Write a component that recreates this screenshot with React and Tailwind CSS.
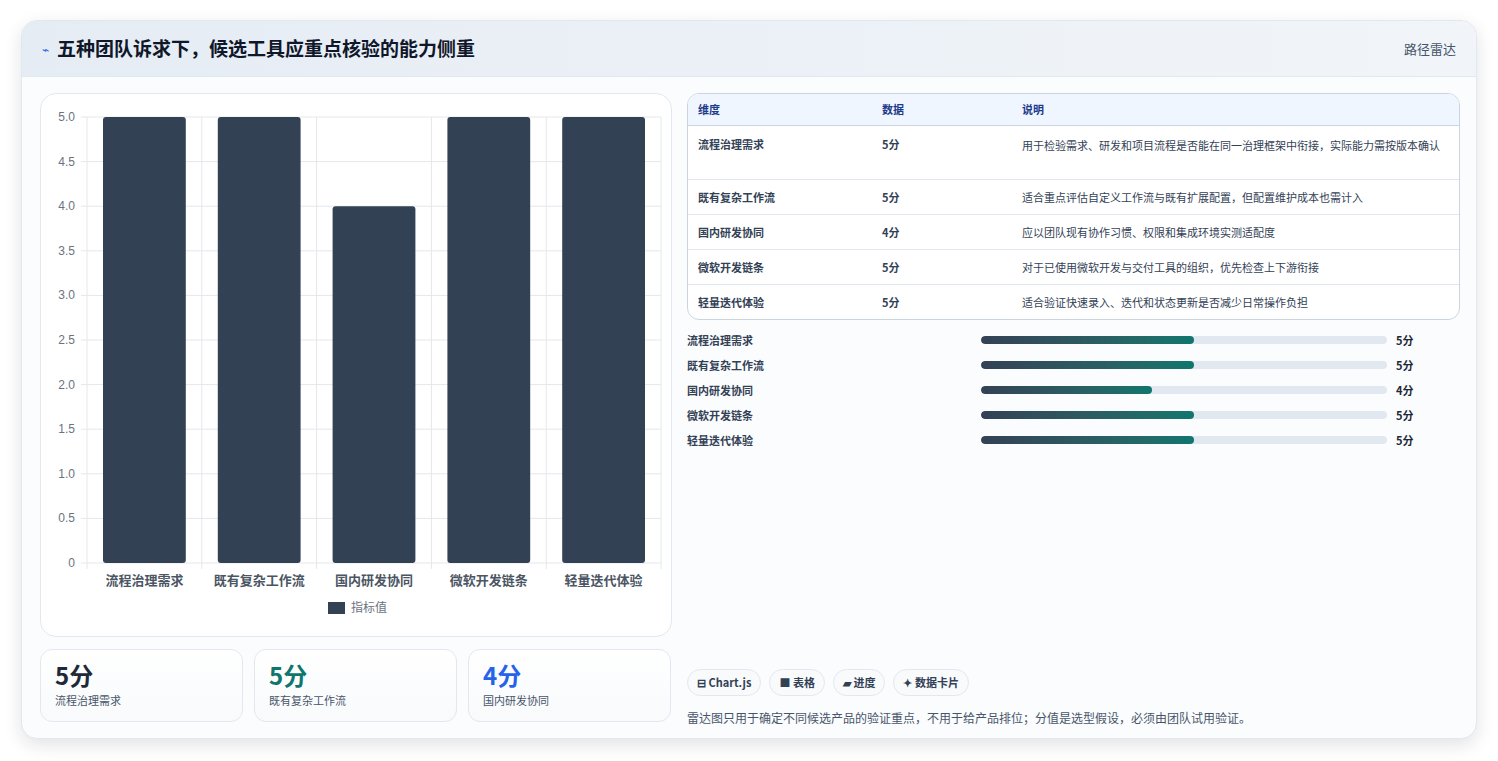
import React from "react";

const rows = [
  ["流程治理需求", 5, "用于检验需求、研发和项目流程是否能在同一治理框架中衔接，实际能力需按版本确认"],
  ["既有复杂工作流", 5, "适合重点评估自定义工作流与既有扩展配置，但配置维护成本也需计入"],
  ["国内研发协同", 4, "应以团队现有协作习惯、权限和集成环境实测适配度"],
  ["微软开发链条", 5, "对于已使用微软开发与交付工具的组织，优先检查上下游衔接"],
  ["轻量迭代体验", 5, "适合验证快速录入、迭代和状态更新是否减少日常操作负担"],
];

function Chart() {
  const W = 632, H = 542;
  const x0 = 46, x1 = 620, y0 = 23, y1 = 469;
  const ticks = [];
  for (let i = 0; i <= 10; i++) ticks.push(i * 0.5);
  const cw = (x1 - x0) / 5;
  return (
    <svg width={W} height={H} className="block">
      {ticks.map((t) => {
        const y = y1 - (t / 5) * (y1 - y0);
        return (
          <g key={t}>
            <line x1={x0 - 6} x2={x1} y1={y} y2={y} stroke="#e5e7eb" />
            <text x={x0 - 12} y={y + 4} textAnchor="end" fontSize="12" fill="#6b7280" fontFamily="Liberation Sans, sans-serif">{t === 0 ? "0" : t.toFixed(1)}</text>
          </g>
        );
      })}
      {[0, 1, 2, 3, 4, 5].map((i) => (
        <line key={i} x1={x0 + i * cw} x2={x0 + i * cw} y1={y0} y2={y1 + 6} stroke="#e5e7eb" />
      ))}
      {rows.map((r, i) => {
        const h = (r[1] / 5) * (y1 - y0);
        return (
          <g key={i}>
            <rect x={x0 + i * cw + 16} y={y1 - h} width={cw - 32} height={h} rx="3" fill="#334155" />
            <text x={x0 + i * cw + cw / 2} y={y1 + 22} textAnchor="middle" fontSize="13" fill="#4b5563" fontWeight="600" fontFamily="Noto Sans CJK SC, sans-serif">{r[0]}</text>
          </g>
        );
      })}
      <rect x={287} y={508} width={17} height={12} fill="#334155" />
      <text x={310} y={518} fontSize="12" fill="#6b7280" fontFamily="Noto Sans CJK SC, sans-serif">指标值</text>
    </svg>
  );
}

export default function App() {
  const stats = [["5分", "流程治理需求", "text-[#1f2937]"], ["5分", "既有复杂工作流", "text-[#0f766e]"], ["4分", "国内研发协同", "text-[#2563eb]"]];
  return (
    <div className="w-[1498px] h-[761px] bg-white pt-5 px-[21px]" style={{ fontFamily: '"Noto Sans CJK SC", "Liberation Sans", sans-serif' }}>
      <div className="w-[1456px] h-[719px] rounded-2xl border border-[#e2e8f0] shadow-[0_6px_18px_rgba(15,23,42,0.12)] overflow-hidden bg-[#fbfcfe] flex flex-col">
        <div className="h-[56px] flex items-center justify-between px-5 bg-gradient-to-r from-[#e6ecf4] to-[#f1f5f9] border-b border-[#e2e8f0]">
          <div className="flex items-center gap-2">
            <span className="text-[#2563eb] text-xs">⌁</span>
            <span className="text-[19px] font-bold text-[#0f172a]">五种团队诉求下，候选工具应重点核验的能力侧重</span>
          </div>
          <span className="text-[13px] text-[#475569]">路径雷达</span>
        </div>
        <div className="flex gap-[15px] px-[18px] pt-4">
          <div className="w-[632px] flex flex-col gap-3">
            <div className="h-[544px] rounded-2xl border border-[#e2e8f0] bg-white"><Chart /></div>
            <div className="flex gap-[11px]">
              {stats.map((s, i) => (
                <div key={i} className="w-[203px] h-[73px] rounded-xl border border-[#e2e8f0] bg-gradient-to-b from-white to-[#f8fafc] px-[14px] pt-[10px]">
                  <div className={`text-[24px] font-bold leading-[30px] ${s[2]}`}>{s[0]}</div>
                  <div className="text-[11px] text-[#475569] mt-[2px]">{s[1]}</div>
                </div>
              ))}
            </div>
          </div>
          <div className="w-[773px] flex flex-col">
            <div className="rounded-xl border border-[#cbd5e1] overflow-hidden bg-white">
              <div className="flex h-[32px] items-center bg-[#eff6ff] border-b border-[#cbd5e1] text-[11px] font-bold text-[#1e3a8a] px-[10px]">
                <div className="w-[184px]">维度</div><div className="w-[140px]">数据</div><div>说明</div>
              </div>
              {rows.map((r, i) => (
                <div key={i} className={`flex px-[10px] text-[11px] text-[#334155] font-semibold ${i ? "border-t border-[#e2e8f0] h-[35px] items-center" : "pt-[10px] h-[53px]"}`}>
                  <div className="w-[184px] shrink-0">{r[0]}</div>
                  <div className="w-[140px] shrink-0">{r[1]}分</div>
                  <div className="w-[430px] leading-[18px] font-normal">{r[2]}</div>
                </div>
              ))}
            </div>
            <div className="flex flex-col gap-[7px] mt-[11px]">
              {rows.map((r, i) => (
                <div key={i} className="flex items-center h-[18px] text-[11px] font-semibold text-[#334155]">
                  <div className="w-[294px]">{r[0]}</div>
                  <div className="w-[406px] h-[8px] rounded-full bg-[#e2e8f0] overflow-hidden">
                    <div className="h-full rounded-full bg-gradient-to-r from-[#334155] to-[#0f766e]" style={{ width: r[1] === 5 ? "52.5%" : "42%" }} />
                  </div>
                  <div className="ml-[9px] font-bold text-[#1f2937]">{r[1]}分</div>
                </div>
              ))}
            </div>
            <div className="flex gap-2 mt-[220px]">
              {["⊟ Chart.js", "■ 表格", "▰ 进度", "✦ 数据卡片"].map((c) => (
                <span key={c} className="h-[27px] px-[9px] flex items-center rounded-full border border-[#e2e8f0] bg-[#f8fafc] text-[11px] font-bold text-[#334155]">{c}</span>
              ))}
            </div>
            <div className="mt-[13px] text-[12px] text-[#475569]">雷达图只用于确定不同候选产品的验证重点，不用于给产品排位；分值是选型假设，必须由团队试用验证。</div>
          </div>
        </div>
      </div>
    </div>
  );
}
